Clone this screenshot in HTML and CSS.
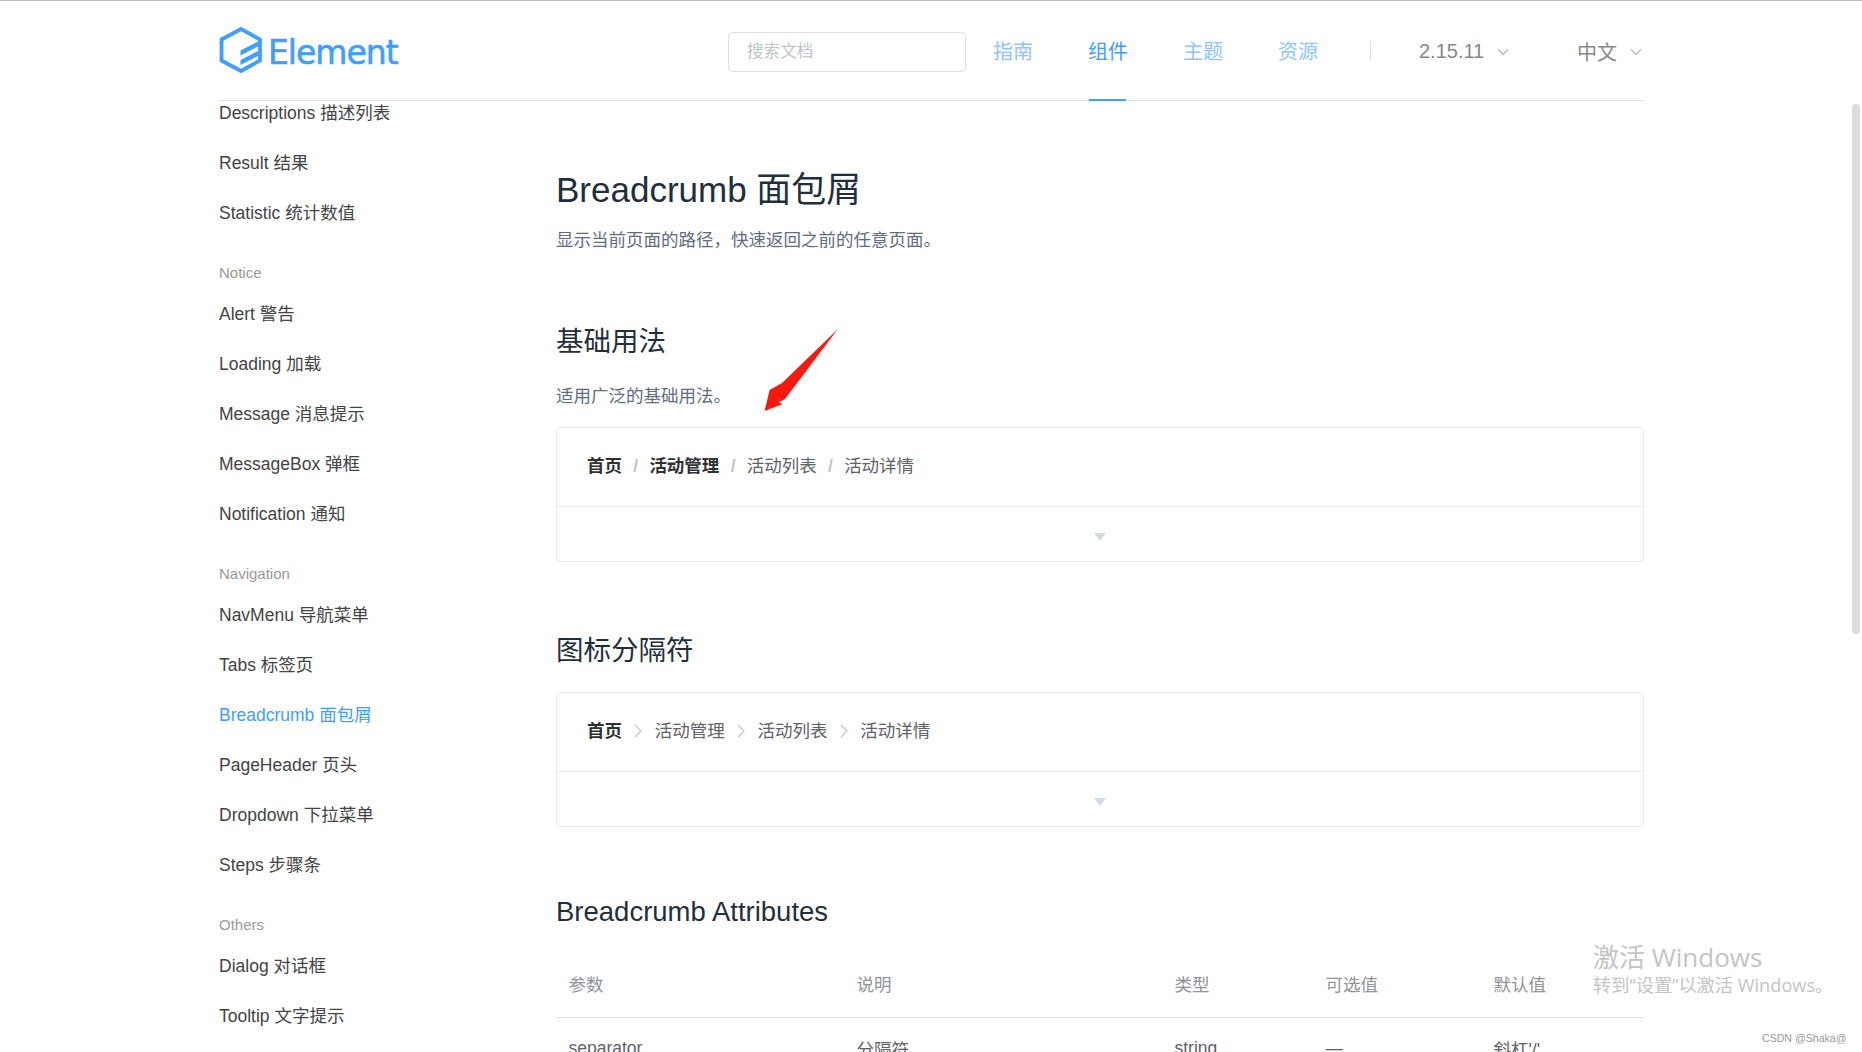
FILE: index.html
```html
<!DOCTYPE html>
<html lang="zh">
<head>
<meta charset="utf-8">
<title>Breadcrumb 面包屑</title>
<link rel="stylesheet" href="styles.css">
</head>
<body>
<div class="topline"></div>
<div class="container">
  <header class="header">
    <a class="logo">
      <svg class="logo-mark" viewBox="5 5 44 47"><path class="hex" d="M27 7 L46 17.5 V38.5 L27 49 L7.5 38.5 V17.5 Z"/><path class="hex-fill" d="M26.5 28.5 L45 19 V24 L26.5 33.5 Z M26.5 38 L45 28.5 V33.5 L26.5 43 Z"/></svg>
      <span class="logo-text">Element</span>
    </a>
    <div class="search">搜索文档</div>
    <nav class="nav">
      <a class="nav-link">指南</a>
      <a class="nav-link active">组件</a>
      <a class="nav-link">主题</a>
      <a class="nav-link">资源</a>
    </nav>
    <span class="divider"></span>
    <span class="drop version">2.15.11 <svg class="caret" viewBox="0 0 12 8"><path d="M1 1.5 L6 6.5 L11 1.5"/></svg></span>
    <span class="drop lang">中文 <svg class="caret" viewBox="0 0 12 8"><path d="M1 1.5 L6 6.5 L11 1.5"/></svg></span>
  </header>
  <div class="body">
    <aside class="side">
      <ul class="side-list">
        <li>Descriptions 描述列表</li>
        <li>Result 结果</li>
        <li>Statistic 统计数值</li>
        <li class="group">Notice</li>
        <li>Alert 警告</li>
        <li>Loading 加载</li>
        <li>Message 消息提示</li>
        <li>MessageBox 弹框</li>
        <li>Notification 通知</li>
        <li class="group">Navigation</li>
        <li>NavMenu 导航菜单</li>
        <li>Tabs 标签页</li>
        <li class="current">Breadcrumb 面包屑</li>
        <li>PageHeader 页头</li>
        <li>Dropdown 下拉菜单</li>
        <li>Steps 步骤条</li>
        <li class="group">Others</li>
        <li>Dialog 对话框</li>
        <li>Tooltip 文字提示</li>
      </ul>
    </aside>
    <main class="main">
      <h2 class="title">Breadcrumb 面包屑</h2>
      <p class="lead">显示当前页面的路径，快速返回之前的任意页面。</p>
      <h3 class="sec sec-first">基础用法</h3>
      <p class="desc">适用广泛的基础用法。</p>
      <section class="demo">
        <div class="demo-top">
          <b class="crumb-strong">首页</b><i class="sep">/</i><b class="crumb-strong">活动管理</b><i class="sep">/</i><span>活动列表</span><i class="sep">/</i><span>活动详情</span>
        </div>
        <div class="demo-foot"><span class="tri"></span></div>
      </section>
      <h3 class="sec sec-second">图标分隔符</h3>
      <section class="demo demo-second">
        <div class="demo-top">
          <b class="crumb-strong">首页</b><svg class="chev" viewBox="0 0 8 14"><path d="M1 1 L7 7 L1 13"/></svg><span>活动管理</span><svg class="chev" viewBox="0 0 8 14"><path d="M1 1 L7 7 L1 13"/></svg><span>活动列表</span><svg class="chev" viewBox="0 0 8 14"><path d="M1 1 L7 7 L1 13"/></svg><span>活动详情</span>
        </div>
        <div class="demo-foot"><span class="tri"></span></div>
      </section>
      <h3 class="sec sec-third">Breadcrumb Attributes</h3>
      <table class="attrs">
        <thead><tr><th class="c1">参数</th><th class="c2">说明</th><th class="c3">类型</th><th class="c4">可选值</th><th>默认值</th></tr></thead>
        <tbody><tr><td>separator</td><td>分隔符</td><td>string</td><td>—</td><td>斜杠'/'</td></tr></tbody>
      </table>
    </main>
  </div>
</div>
<svg class="arrow" viewBox="0 0 76 86"><path d="M73.7 1.3 L18 55 L5.6 62 L0.6 83 L18.2 76.3 L15 74 L21 71 Z"/></svg>
<div class="scrollbar"></div>
<div class="activate"><div class="a1">激活 Windows</div><div class="a2">转到“设置”以激活 Windows。</div></div>
<div class="csdn">CSDN @Shaka@</div>
</body>
</html>
```
FILE: styles.css
```css
* { box-sizing: border-box; }
html, body { margin: 0; height: 1052px; overflow: hidden; background: #fff; }
body { font-family: "Liberation Sans", "Noto Sans CJK SC", sans-serif; color: #5e6d82; font-size: 17.5px; }
ul { list-style: none; margin: 0; padding: 0; }
.topline { height: 1px; background: #bdbdbd; }
.container { width: 1425px; margin-left: 219px; }
.header { height: 100px; display: flex; align-items: center; border-bottom: 1px solid #dcdfe6; }
.logo { display: flex; align-items: center; width: 509px; flex: none; gap: 5px; color: #409eff; }
.logo-mark { width: 44px; height: 47px; flex: none; }
.hex { fill: none; stroke: #409eff; stroke-width: 3.8; }
.hex-fill { fill: #409eff; }
.logo-text { font-family: "DejaVu Sans", sans-serif; font-size: 33px; letter-spacing: -1px; padding-top: 3px; -webkit-text-stroke: 0.6px #409eff; }
.search { width: 238px; height: 40px; line-height: 38px; margin-top: 2px; border: 1px solid #dcdfe6; border-radius: 5px; padding-left: 18px; color: #c0c4cc; font-size: 16.6px; flex: none; }
.nav { display: flex; gap: 55px; margin-left: 27px; flex: none; }
.nav-link { width: 40px; font-size: 20px; color: #8cc5ff; height: 99px; line-height: 102px; position: relative; }
.nav-link.active { color: #409eff; }
.nav-link.active::after { content: ""; position: absolute; left: 1px; bottom: -1px; width: 37px; height: 2px; background: #409eff; }
.divider { width: 1px; height: 20px; background: #dcdfe6; margin-left: 52px; flex: none; }
.drop { display: flex; align-items: center; color: #888; font-size: 20px; padding-top: 2px; flex: none; white-space: nowrap; }
.version { margin-left: 48px; width: 158px; }
.lang { width: 67px; }
.caret { width: 12px; height: 8px; margin-left: 13px; fill: none; stroke: #b0b3b8; stroke-width: 1.2; }
.body { display: flex; }
.side { width: 337px; flex: none; overflow: hidden; height: 951px; color: #444; }
.side-list { margin-top: -13px; }
.side-list li { height: 50px; line-height: 50px; white-space: nowrap; }
.side-list li.group { height: 32px; line-height: 32px; margin-top: 19px; font-size: 15px; color: #999; }
.side-list li.current { color: #409eff; }
.main { width: 1088px; flex: none; height: 951px; overflow: hidden; }
.title { margin: 64px 0 0; font-size: 35px; font-weight: 400; line-height: 50px; color: #1f2f3d; }
.lead { margin: 12px 0 0; line-height: 26px; }
.sec { font-weight: 400; color: #1f2f3d; margin: 0; font-size: 27.5px; line-height: 40px; }
.sec-first { margin-top: 69px; }
.desc { margin: 21px 0 0; line-height: 26px; }
.demo { border: 1px solid #ebebeb; border-radius: 4px; margin-top: 18px; }
.demo-second { margin-top: 21px; }
.demo-top { height: 79px; padding: 0 30px 2px; display: flex; align-items: baseline; line-height: 77px; border-bottom: 1px solid #eaeefb; color: #606266; }
.demo-foot { height: 54px; padding-top: 5px; display: flex; justify-content: center; align-items: center; }
.tri { width: 0; height: 0; border: 6px solid transparent; border-top: 8px solid #d3dce6; border-bottom: 0; }
.crumb-strong { color: #303133; font-weight: 700; }
.sep { font-style: normal; font-weight: 700; margin: 0 11.25px; color: #c0c4cc; }
.chev { width: 8px; height: 14px; margin: 0 12.4px; align-self: center; fill: none; stroke: #c0c4cc; stroke-width: 1.1; }
.sec-second { margin-top: 69px; }
.sec-third { margin-top: 65px; }
.attrs { width: 100%; border-collapse: collapse; margin-top: 19px; table-layout: fixed; }
.attrs th { text-align: left; font-weight: 400; color: #909399; height: 66px; padding: 0 12.5px; border-bottom: 1px solid #dfe1e8; }
.attrs td { height: 62px; padding: 0 12.5px; color: #606266; }
.c1 { width: 288px; }
.c2 { width: 318px; }
.c3 { width: 151px; }
.c4 { width: 168px; }
.arrow { position: absolute; left: 764px; top: 328px; width: 76px; height: 86px; fill: #f5190f; }
.scrollbar { position: absolute; right: 2px; top: 104px; width: 8px; height: 530px; border-radius: 4px; background: #dcdcdc; }
.activate { position: absolute; left: 1593px; top: 942px; color: #c4c4c4; font-family: "Open Sans", "Noto Sans CJK SC", sans-serif; }
.a1 { font-size: 26px; line-height: 30px; }
.a2 { font-size: 18.2px; line-height: 26px; }
.csdn { position: absolute; left: 1762px; top: 1032px; font-size: 10.6px; color: #999; }
```
